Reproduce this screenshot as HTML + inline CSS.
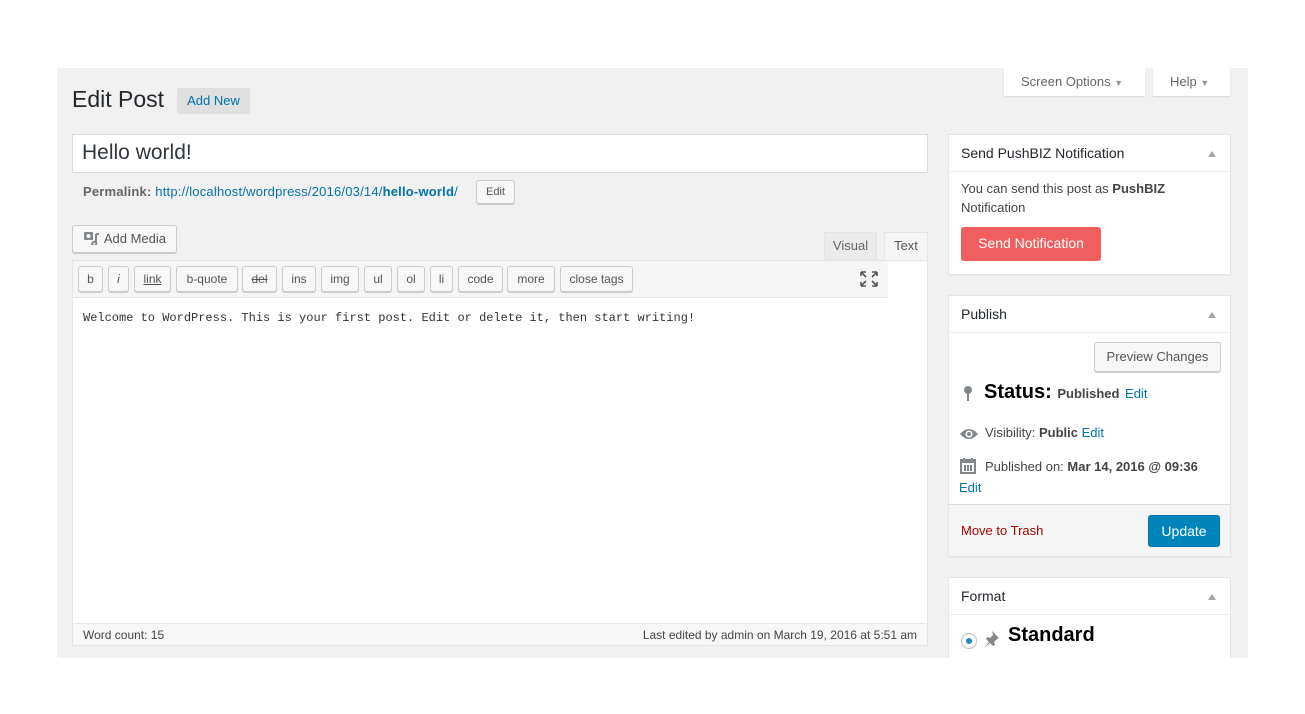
<!DOCTYPE html><html><head><style>
body{margin:0;width:1305px;height:714px;background:#fff;font-family:"Liberation Sans",sans-serif;font-size:13px;color:#444;position:relative;overflow:hidden}
.a{position:absolute;box-sizing:border-box}
.btn{position:absolute;box-sizing:border-box;background:#f7f7f7;border:1px solid #ccc;border-radius:3px;box-shadow:0 1px 0 #ccc;color:#555;font-size:12px;text-align:center}
.box{position:absolute;box-sizing:border-box;background:#fff;border:1px solid #e5e5e5;box-shadow:0 1px 1px rgba(0,0,0,.04);left:948px;width:283px}
.hd{position:absolute;left:0;right:0;top:0;height:37px;border-bottom:1px solid #eee;font-size:14px;color:#23282d;padding:10px 12px;box-sizing:border-box}
.hd:after{content:"";position:absolute;right:14px;top:16px;border-left:4px solid transparent;border-right:4px solid transparent;border-bottom:6px solid #a0a5aa}
a,.l{color:#0073aa;text-decoration:none}
.tb{position:absolute;top:266px;height:26px;box-sizing:border-box;background:#f7f7f7;border:1px solid #ccc;border-radius:3px;box-shadow:0 1px 0 #ccc;font-size:12px;color:#555;line-height:24px;text-align:center}
</style></head><body>
<div class="a" style="left:57px;top:68px;width:1191px;height:590px;background:#f1f1f1"></div>
<div class="a" style="left:1004px;top:68px;width:141px;height:28px;background:#fff;box-shadow:0 1px 1px rgba(0,0,0,.1);font-size:13px;color:#666;padding:6px 0 0 17px">Screen Options <span style="font-size:9px;color:#999">▼</span></div>
<div class="a" style="left:1153px;top:68px;width:77px;height:28px;background:#fff;box-shadow:0 1px 1px rgba(0,0,0,.1);font-size:13px;color:#666;padding:6px 0 0 17px">Help <span style="font-size:9px;color:#999">▼</span></div>
<div class="a" style="left:72px;top:86px;font-size:23px;color:#23282d">Edit Post</div>
<div class="a" style="left:177px;top:88px;width:73px;height:26px;background:#e0e0e0;border-radius:2px;color:#0073aa;font-size:13px;text-align:center;line-height:26px">Add New</div>
<div class="a" style="left:72px;top:134px;width:856px;height:39px;background:#fff;border:1px solid #ddd;font-size:21px;color:#32373c;padding:6px 9px">Hello world!</div>
<div class="a" style="left:83px;top:184px;font-size:13px;color:#666;letter-spacing:0.2px;white-space:nowrap"><b>Permalink:</b> <span class="l">http://localhost/wordpress/2016/03/14/<b>hello-world</b>/</span></div>
<div class="btn" style="left:476px;top:180px;width:39px;height:24px;line-height:22px;font-size:11px">Edit</div>
<div class="btn" style="left:72px;top:225px;width:105px;height:28px;line-height:26px;font-size:13px"><svg width="18" height="14" viewBox="0 0 18 14" style="vertical-align:-2px"><rect x="1" y="1" width="9" height="8" rx="1" fill="#82878c"/><circle cx="5.5" cy="5" r="2" fill="#f7f7f7"/><path d="M13 3v9M13 3h3M13 12a2 2 0 1 1-1-1" stroke="#82878c" stroke-width="2" fill="none"/></svg> Add Media</div>
<div class="a" style="left:824px;top:232px;width:53px;height:28px;background:#ebebeb;border:1px solid #e5e5e5;color:#666;text-align:center;line-height:26px">Visual</div>
<div class="a" style="left:884px;top:232px;width:44px;height:29px;background:#f5f5f5;border:1px solid #e5e5e5;border-bottom:0;color:#555;text-align:center;line-height:26px">Text</div>
<div class="a" style="left:72px;top:260px;width:856px;height:386px;background:#fff;border:1px solid #e5e5e5"></div>
<div class="a" style="left:73px;top:261px;width:815px;height:37px;background:#f5f5f5;border-bottom:1px solid #e5e5e5"></div>
<div class="tb" style="left:78px;width:25px">b</div>
<div class="tb" style="left:108px;width:21px;font-style:italic">i</div>
<div class="tb" style="left:134px;width:37px;text-decoration:underline">link</div>
<div class="tb" style="left:176px;width:62px">b-quote</div>
<div class="tb" style="left:242px;width:35px;text-decoration:line-through">del</div>
<div class="tb" style="left:282px;width:34px">ins</div>
<div class="tb" style="left:321px;width:38px">img</div>
<div class="tb" style="left:364px;width:28px">ul</div>
<div class="tb" style="left:397px;width:28px">ol</div>
<div class="tb" style="left:430px;width:23px">li</div>
<div class="tb" style="left:458px;width:45px">code</div>
<div class="tb" style="left:507px;width:48px">more</div>
<div class="tb" style="left:560px;width:73px">close tags</div>
<svg class="a" style="left:860px;top:271px" width="18" height="16" viewBox="0 0 18 16"><path d="M1 1h5M1 1v4M1 1l5 5M17 1h-5M17 1v4M17 1l-5 5M1 15h5M1 15v-4M1 15l5-5M17 15h-5M17 15v-4M17 15l-5-5" stroke="#555" stroke-width="1.6" fill="none"/></svg>
<div class="a" style="left:83px;top:311px;font-family:'Liberation Mono',monospace;font-size:12px;color:#333">Welcome to WordPress. This is your first post. Edit or delete it, then start writing!</div>
<div class="a" style="left:73px;top:623px;width:854px;height:22px;background:#f7f7f7;border-top:1px solid #e5e5e5;font-size:12px;color:#444;padding:4px 10px">Word count: 15<span style="float:right">Last edited by admin on March 19, 2016 at 5:51 am</span></div>

<div class="box" style="top:134px;height:141px"><div class="hd">Send PushBIZ Notification</div>
<div class="a" style="left:12px;top:44px;width:250px;line-height:19px">You can send this post as <b>PushBIZ</b> Notification</div>
<div class="a" style="left:12px;top:92px;width:140px;height:34px;background:#f05e5e;border-radius:3px;color:#fff;font-size:14px;text-align:center;line-height:33px">Send Notification</div></div>

<div class="box" style="top:295px;height:262px"><div class="hd">Publish</div>
<div class="btn" style="left:145px;top:46px;width:127px;height:30px;line-height:28px;font-size:13px">Preview Changes</div>
<svg class="a" style="left:14px;top:90px" width="10" height="16" viewBox="0 0 10 16"><circle cx="5" cy="4" r="4" fill="#82878c"/><path d="M5 7v8" stroke="#82878c" stroke-width="2"/></svg>
<div class="a" style="left:35px;top:85px;font-size:20px;color:#000;font-weight:bold;white-space:nowrap">Status: <span style="font-size:13px;color:#444">Published</span> <span class="l" style="font-size:13px;font-weight:normal">Edit</span></div>
<svg class="a" style="left:10px;top:131px" width="20" height="14" viewBox="0 0 20 14"><path d="M1 7Q10 -3 19 7Q10 17 1 7Z" fill="#82878c"/><circle cx="10" cy="7" r="3.5" fill="#fff"/><circle cx="10" cy="7" r="2" fill="#82878c"/></svg>
<div class="a" style="left:36px;top:129px">Visibility: <b>Public</b> <span class="l">Edit</span></div>
<svg class="a" style="left:11px;top:161px" width="16" height="17" viewBox="0 0 16 17"><rect x="1" y="3" width="14" height="13" fill="none" stroke="#82878c" stroke-width="2"/><path d="M1 5h14M4 1v4M12 1v4M5 8v6M8 8v6M11 8v6" stroke="#82878c" stroke-width="2"/></svg>
<div class="a" style="left:36px;top:163px">Published on: <b>Mar 14, 2016 @ 09:36</b></div>
<div class="a l" style="left:10px;top:184px">Edit</div>
<div class="a" style="left:0;top:208px;width:281px;height:52px;background:#f5f5f5;border-top:1px solid #ddd"></div>
<div class="a" style="left:12px;top:227px;color:#a00">Move to Trash</div>
<div class="a" style="left:199px;top:219px;width:72px;height:32px;background:#0085ba;border:1px solid #0073aa;border-radius:3px;color:#fff;font-size:14px;text-align:center;line-height:30px">Update</div></div>

<div class="box" style="top:577px;height:81px;border-bottom:0;box-shadow:none"><div class="hd">Format</div>
<div class="a" style="left:12px;top:55px;width:16px;height:16px;border:1px solid #bbb;border-radius:50%;background:#fff"><div style="margin:4px;width:6px;height:6px;border-radius:50%;background:#1e8cbe"></div></div>
<svg class="a" style="left:33px;top:52px" width="18" height="18" viewBox="0 0 18 18"><path d="M10 1l7 7-2 1-3 3 1 3-2 1-3-3-6 5 5-6-3-3 1-2 3 1 3-3z" fill="#82878c"/></svg>
<div class="a" style="left:59px;top:46px;font-size:20px;color:#000;font-weight:bold">Standard</div></div>
</body></html>
